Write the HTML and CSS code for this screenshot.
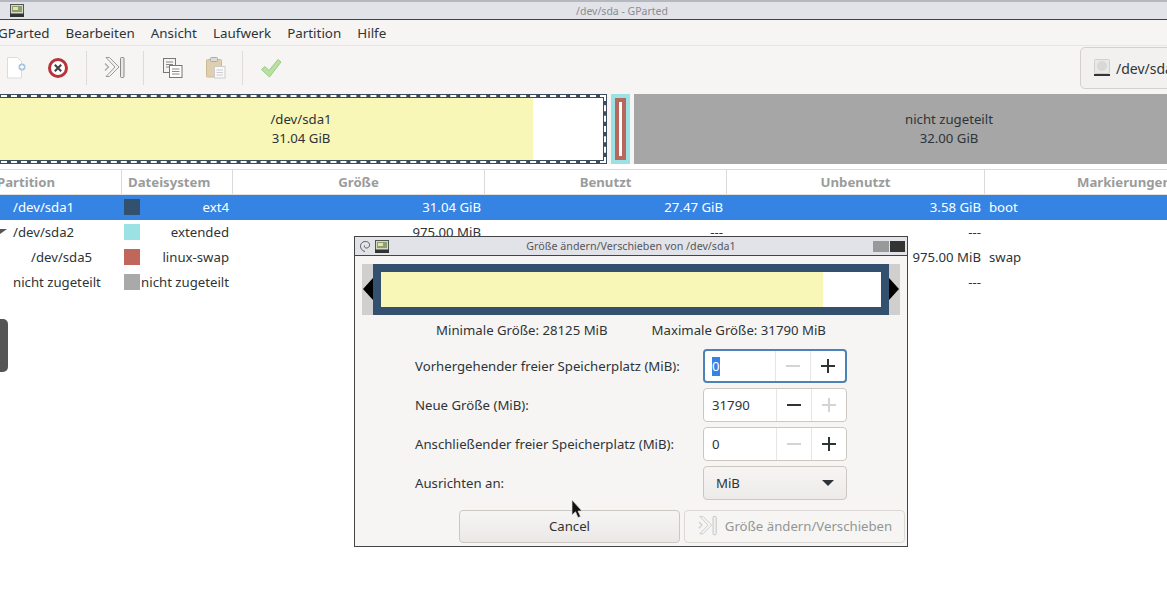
FILE: index.html
```html
<!DOCTYPE html>
<html lang="de">
<head>
    <meta charset="UTF-8">
    <title>/dev/sda - GParted</title>
    <link rel="stylesheet" href="styles.css">
</head>
<body>
    <div class="app">
        <div class="titlebar">
            <svg class="swirl" viewBox="0 0 12 12"><path d="M6 11.500C2.500 10.500 .8 7.500 1.800 4.500 3 1.500 7 .5 9.500 2.500 11.500 4.500 10.500 8 7.500 8 6 8 5 7 5.500 5.500" fill="none" stroke="#555" stroke-width="1"/></svg>
            <svg class="appicon" viewBox="0 0 14 13"><rect x="0.500" y="0.500" width="13" height="11.500" fill="#d8d8c8" stroke="#555"/><rect x="2" y="2" width="10" height="6" fill="#8aa070"/><rect x="3" y="3" width="5" height="3" fill="#e8e4a0"/><rect x="0" y="9.500" width="14" height="3.500" fill="#333"/></svg>
            <span class="titlebar-text">/dev/sda - GParted</span>
        </div>

        <div class="menubar">
            <span>GParted</span>
            <span>Bearbeiten</span>
            <span>Ansicht</span>
            <span>Laufwerk</span>
            <span>Partition</span>
            <span>Hilfe</span>
        </div>

        <div class="toolbar">
            <div class="tool">
                <svg viewBox="0 0 24 24" width="24" height="24"><path d="M3.500 1.500h10l4 4v16.500h-14z" fill="#fff" stroke="#dcdcdc"/><circle cx="18" cy="11" r="3.500" fill="#a9c3dc"/><path d="M16 11h4M18 9v4" stroke="#fff" stroke-width="1.300"/></svg>
            </div>
            <div class="tool">
                <svg viewBox="0 0 24 24" width="24" height="24"><circle cx="12" cy="12" r="8.500" fill="#fff" stroke="#b8333a" stroke-width="3"/><path d="M8.800 8.800l6.400 6.400M15.200 8.800l-6.400 6.400" stroke="#444" stroke-width="2.200"/></svg>
            </div>
            <div class="tool-sep"></div>
            <div class="tool">
                <svg viewBox="0 0 24 24" width="24" height="24"><path d="M3 1.500h3.500L16 11l-9.500 9.500H3L12 11z" fill="#f2f2f0" stroke="#9a9a9a"/><path d="M2 7.500 5.500 11 2 14.500" fill="none" stroke="#a8a8a8" stroke-width="1.300"/><rect x="17.500" y="1.500" width="3.500" height="20" rx="1" fill="#e8e8e8" stroke="#8a8a8a"/></svg>
            </div>
            <div class="tool-sep"></div>
            <div class="tool">
                <svg viewBox="0 0 24 24" width="24" height="24"><rect x="3.500" y="2.500" width="12" height="14" fill="#f4f4f4" stroke="#777"/><path d="M6 6h7M6 8.500h7M6 11h5" stroke="#888"/><rect x="9.500" y="9.500" width="12.500" height="12" fill="#fff" stroke="#777"/><path d="M12 13h7.500M12 15.500h7.500M12 18h7.500" stroke="#888"/></svg>
            </div>
            <div class="tool">
                <svg viewBox="0 0 24 24" width="24" height="24"><rect x="4.500" y="3.500" width="15" height="17.500" rx="1" fill="#e0cfae" stroke="#cdbb98"/><rect x="8.500" y="1.500" width="7" height="4" rx="1" fill="#dcdcd8" stroke="#aaa"/><rect x="12.500" y="10.500" width="10.500" height="11.500" fill="#fafafa" stroke="#ccc"/><path d="M14.500 14h6.500M14.500 16.500h6.500M14.500 19h6.500" stroke="#ccc"/></svg>
            </div>
            <div class="tool-sep"></div>
            <div class="tool">
                <svg viewBox="0 0 24 24" width="24" height="24"><path d="M2.500 13.500l3.500-3 4 4L19 3.500l3 2.500-11.500 15z" fill="#b8e0a0" stroke="#9ccb86"/></svg>
            </div>
            <div class="device">
                <svg viewBox="0 0 18 18" width="18" height="18"><rect x="1.500" y="0.500" width="15" height="14" rx="1" fill="#e8e8e4" stroke="#cfcfcb"/><circle cx="9" cy="7" r="5" fill="#d8d8d4"/><rect x="1" y="15" width="16" height="2" fill="#333"/></svg>
                <span>/dev/sda</span>
            </div>
        </div>

        <div class="graph">
            <div class="part-sda1">
                <div class="part-dash">
                    <div class="part-inner">
                        <div class="part-used"></div>
                        <div class="part-label part-label-sda1">/dev/sda1<br>31.04 GiB</div>
                    </div>
                </div>
            </div>
            <div class="part-ext"><div class="part-swap"><div class="part-swap-free"></div></div></div>
            <div class="part-free">nicht zugeteilt<br>32.00 GiB</div>
        </div>

        <div class="table">
            <div class="row head">
                <div class="cell">Partition</div>
                <div class="cell">Dateisystem</div>
                <div class="cell center">Größe</div>
                <div class="cell center">Benutzt</div>
                <div class="cell center">Unbenutzt</div>
                <div class="cell center">Markierungen</div>
            </div>
            <div class="row selected">
                <div class="cell name">/dev/sda1</div>
                <div class="cell fs"><i class="swatch c-ext4"></i><span>ext4</span></div>
                <div class="cell num">31.04 GiB</div>
                <div class="cell num">27.47 GiB</div>
                <div class="cell num">3.58 GiB</div>
                <div class="cell flag">boot</div>
            </div>
            <div class="row">
                <div class="cell name"><b class="expander"></b>/dev/sda2</div>
                <div class="cell fs"><i class="swatch c-extended"></i><span>extended</span></div>
                <div class="cell num">975.00 MiB</div>
                <div class="cell num">---</div>
                <div class="cell num">---</div>
                <div class="cell flag"></div>
            </div>
            <div class="row">
                <div class="cell name sub">/dev/sda5</div>
                <div class="cell fs"><i class="swatch c-swap"></i><span>linux-swap</span></div>
                <div class="cell num">975.00 MiB</div>
                <div class="cell num">---</div>
                <div class="cell num">975.00 MiB</div>
                <div class="cell flag">swap</div>
            </div>
            <div class="row">
                <div class="cell name">nicht zugeteilt</div>
                <div class="cell fs"><i class="swatch c-free"></i><span>nicht zugeteilt</span></div>
                <div class="cell num">32.00 GiB</div>
                <div class="cell num">---</div>
                <div class="cell num">---</div>
                <div class="cell flag"></div>
            </div>
        </div>
    </div>

    <div class="side-handle"></div>

    <div class="dialog">
        <div class="dialog-title">
            <svg class="swirl" viewBox="0 0 12 12"><path d="M6 11.500C2.500 10.500 .8 7.500 1.800 4.500 3 1.500 7 .5 9.500 2.500 11.500 4.500 10.500 8 7.500 8 6 8 5 7 5.500 5.500" fill="none" stroke="#555" stroke-width="1"/></svg>
            <svg class="appicon" viewBox="0 0 14 13"><rect x="0.500" y="0.500" width="13" height="11.500" fill="#d8d8c8" stroke="#555"/><rect x="2" y="2" width="10" height="6" fill="#8aa070"/><rect x="3" y="3" width="5" height="3" fill="#e8e4a0"/><rect x="0" y="9.500" width="14" height="3.500" fill="#333"/></svg>
            <span class="dialog-title-text">Größe ändern/Verschieben von /dev/sda1</span>
            <i class="win-btn win-min"></i>
            <i class="win-btn win-close"></i>
        </div>
        <div class="dialog-body">
            <div class="resizer">
                <b class="arrow arrow-left"></b>
                <div class="resizer-frame">
                    <div class="resizer-used"></div>
                </div>
                <b class="arrow arrow-right"></b>
            </div>
            <div class="sizes">
                <span>Minimale Größe: 28125 MiB</span>
                <span>Maximale Größe: 31790 MiB</span>
            </div>
            <div class="form">
                <div class="form-row">
                    <label>Vorhergehender freier Speicherplatz (MiB):</label>
                    <div class="spin focus">
                        <div class="spin-value"><span class="picked">0</span></div>
                        <div class="spin-btn off"><svg viewBox="0 0 16 16" width="16" height="16"><path d="M1 8h14" stroke="currentColor" stroke-width="2"/></svg></div>
                        <div class="spin-btn"><svg viewBox="0 0 16 16" width="16" height="16"><path d="M1 8h14M8 1v14" stroke="currentColor" stroke-width="2"/></svg></div>
                    </div>
                </div>
                <div class="form-row">
                    <label>Neue Größe (MiB):</label>
                    <div class="spin">
                        <div class="spin-value">31790</div>
                        <div class="spin-btn"><svg viewBox="0 0 16 16" width="16" height="16"><path d="M1 8h14" stroke="currentColor" stroke-width="2"/></svg></div>
                        <div class="spin-btn off"><svg viewBox="0 0 16 16" width="16" height="16"><path d="M1 8h14M8 1v14" stroke="currentColor" stroke-width="2"/></svg></div>
                    </div>
                </div>
                <div class="form-row">
                    <label>Anschließender freier Speicherplatz (MiB):</label>
                    <div class="spin">
                        <div class="spin-value">0</div>
                        <div class="spin-btn off"><svg viewBox="0 0 16 16" width="16" height="16"><path d="M1 8h14" stroke="currentColor" stroke-width="2"/></svg></div>
                        <div class="spin-btn"><svg viewBox="0 0 16 16" width="16" height="16"><path d="M1 8h14M8 1v14" stroke="currentColor" stroke-width="2"/></svg></div>
                    </div>
                </div>
                <div class="form-row">
                    <label>Ausrichten an:</label>
                    <div class="combo"><span>MiB</span><b class="combo-arrow"></b></div>
                </div>
            </div>
            <div class="actions">
                <div class="btn">Cancel</div>
                <div class="btn disabled">
                    <svg viewBox="0 0 24 24" width="22" height="22"><path d="M3 1.500h3.500L16 11l-9.500 9.500H3L12 11z" fill="#f6f5f4" stroke="#c8c8c8"/><path d="M2 7.500 5.500 11 2 14.500" fill="none" stroke="#ccc" stroke-width="1.300"/><rect x="17.500" y="1.500" width="3.500" height="20" rx="1" fill="#f0f0f0" stroke="#c4c4c4"/></svg>
                    <span>Größe ändern/Verschieben</span>
                </div>
            </div>
        </div>
    </div>

    <svg class="cursor" viewBox="0 0 13 20" width="13" height="20"><path d="M1 1v15l3.500-3.200 2.500 5.700 2.500-1-2.500-5.500H11z" fill="#111" stroke="#ddd" stroke-width="0.700"/></svg>
</body>
</html>
```

FILE: styles.css
```css
* {
    margin: 0;
    padding: 0;
    box-sizing: border-box;
}
body {
    width: 1167px;
    height: 595px;
    overflow: hidden;
    background-color: #fff;
    color: #2e3436;
    font-family: "Noto Sans", sans-serif;
    font-size: 13.2px;
    position: relative;
}
.app {
    width: 1284px;
    margin-left: -20px;
}
.titlebar {
    height: 20px;
    display: flex;
    align-items: center;
    position: relative;
    padding-left: 9px;
    gap: 9px;
    background-color: #e2e3e8;
    border-top: 2px solid #b6b8c0;
    border-bottom: 1px solid #444;
}
.swirl {
    width: 12px;
    height: 12px;
    flex: none;
}
.appicon {
    width: 14px;
    height: 13px;
    flex: none;
}
.titlebar-text {
    position: absolute;
    left: 0;
    right: 0;
    text-align: center;
    font-size: 10.5px;
    color: #8a8c92;
}
.menubar {
    height: 26px;
    display: flex;
    align-items: center;
    padding: 1px 0 0 18px;
    gap: 16px;
    font-size: 13.4px;
    background-color: #f6f5f4;
    border-bottom: 1px solid #e8e6e3;
}
.toolbar {
    height: 47px;
    display: flex;
    align-items: center;
    padding: 0 0 3px 15px;
    background-color: #f6f5f4;
}
.tool {
    width: 42px;
    display: flex;
    justify-content: center;
}
.tool-sep {
    width: 1px;
    height: 34px;
    margin: 0 7px;
    background-color: #dfdcd8;
}
.device {
    margin-left: auto;
    width: 184px;
    height: 42px;
    display: flex;
    align-items: center;
    gap: 5px;
    padding-left: 12px;
    font-size: 14px;
    background-color: #f2f1ef;
    border: 1px solid #d4d0cb;
    border-radius: 5px;
}
.graph {
    height: 71px;
    display: flex;
    gap: 4px;
    padding: 1px 0 0;
    background-color: #f6f5f4;
}
.part-sda1 {
    width: 627px;
    padding: 1px;
    background-color: #3c4c5e;
}
.part-dash {
    height: 100%;
    padding: 1px;
    background-color: #3c4c5e;
    border: 2px dashed #fff;
}
.part-inner {
    height: 100%;
    display: flex;
    position: relative;
    background-color: #fff;
}
.part-used {
    width: 549px;
    background-color: #f8f7b8;
}
.part-label {
    text-align: center;
    line-height: 19px;
    align-self: center;
}
.part-label-sda1 {
    position: absolute;
    left: 0;
    width: 634px;
}
.part-ext {
    width: 19px;
    padding: 4px;
    background-color: #9be2e4;
}
.part-swap {
    height: 100%;
    padding: 4px;
    background-color: #b9665c;
}
.part-swap-free {
    height: 100%;
    background-color: #fff;
}
.part-free {
    flex: 1;
    padding-top: 16px;
    text-align: center;
    line-height: 19px;
    background-color: #a6a6a6;
}
.table {
    margin-top: 5px;
    border-top: 1px solid #dcd8d3;
}
.row {
    height: 25px;
    display: grid;
    grid-template-columns: 142px 111px 252px 242px 258px 279px;
    align-items: center;
}
.row .cell {
    padding-bottom: 2px;
}
.head {
    height: 25px;
    color: #9a9c9c;
    font-weight: 700;
    background-color: #fff;
    border-bottom: 1px solid #e4e1dd;
}
.head .cell {
    height: 100%;
    line-height: 24px;
    padding-left: 6px;
    padding-right: 6px;
    padding-bottom: 0;
    border-right: 1px solid #dcdad6;
}
.head .cell:first-child {
    padding-left: 17px;
}
.head .center {
    text-align: center;
}
.selected {
    color: #fff;
    background-color: #3584e4;
}
.name {
    position: relative;
    padding-left: 33px;
}
.sub {
    padding-left: 51px;
}
.expander {
    position: absolute;
    left: 20px;
    top: 6px;
    width: 0;
    height: 0;
    border-top: 5px solid #555;
    border-right: 7px solid transparent;
}
.fs {
    display: flex;
    align-items: center;
    justify-content: space-between;
    padding: 0 4px 0 2px;
}
.swatch {
    width: 16px;
    height: 16px;
    flex: none;
}
.c-ext4 { background-color: #34506f; }
.c-extended { background-color: #9be2e4; }
.c-swap { background-color: #c1665a; }
.c-free { background-color: #a9a9a9; }
.num {
    text-align: right;
    padding-right: 4px;
}
.flag {
    padding-left: 4px;
}
.side-handle {
    position: absolute;
    left: -6px;
    top: 319px;
    width: 14px;
    height: 53px;
    background-color: #555;
    border-radius: 5px;
}
.dialog {
    position: absolute;
    left: 354px;
    top: 236px;
    width: 554px;
    height: 311px;
    background-color: #f6f5f4;
    border: 1px solid #444;
}
.dialog-title {
    height: 19px;
    display: flex;
    align-items: center;
    position: relative;
    padding: 0 2px 0 4px;
    gap: 4px;
    background-color: #e2e3e8;
    border-bottom: 1px solid #444;
}
.dialog-title-text {
    position: absolute;
    left: 0;
    right: 0;
    text-align: center;
    font-size: 10.7px;
    color: #55575c;
}
.win-btn {
    height: 11px;
    position: relative;
}
.win-min {
    width: 16px;
    margin-left: auto;
    background-color: #999;
}
.win-close {
    width: 15px;
    margin-left: -3px;
    background-color: #333;
}
.dialog-body {
    padding: 8px 7px 0;
}
.resizer {
    height: 51px;
    display: flex;
    position: relative;
    padding: 0 11px;
    background-color: #cfcfcf;
}
.resizer-frame {
    flex: 1;
    padding: 8px;
    background-color: #34506f;
}
.resizer-used {
    height: 100%;
    background: linear-gradient(to right, #f8f7b8 442px, #fff 442px);
}
.arrow {
    position: absolute;
    top: 14px;
    width: 0;
    height: 0;
    border-top: 11px solid transparent;
    border-bottom: 11px solid transparent;
}
.arrow-left {
    left: 1px;
    border-right: 10px solid #000;
}
.arrow-right {
    right: 1px;
    border-left: 10px solid #000;
}
.sizes {
    display: flex;
    justify-content: center;
    gap: 44px;
    height: 34px;
    line-height: 31px;
}
.form {
    display: flex;
    flex-direction: column;
    gap: 5px;
    padding: 0 53px;
}
.form-row {
    height: 34px;
    display: flex;
    align-items: center;
    justify-content: space-between;
}
.spin {
    width: 144px;
    height: 34px;
    display: flex;
    background-color: #fff;
    border: 1px solid #cdc7c2;
    border-radius: 4px;
}
.focus {
    border: 2px solid #4d82b8;
}
.spin-value {
    flex: 1;
    padding-left: 8px;
    line-height: 32px;
}
.focus .spin-value {
    padding-left: 7px;
    line-height: 30px;
}
.picked {
    color: #fff;
    background-color: #3584e4;
    display: inline-block;
    line-height: 19px;
}
.spin-btn {
    width: 35px;
    display: flex;
    align-items: center;
    justify-content: center;
    color: #2e3436;
    border-left: 1px solid #e8e6e3;
}
.spin-btn.off {
    color: #d4d4d2;
}
.combo {
    width: 144px;
    height: 34px;
    display: flex;
    align-items: center;
    justify-content: space-between;
    padding: 0 12px;
    background: linear-gradient(#f6f5f4, #ecebe9);
    border: 1px solid #cdc7c2;
    border-radius: 4px;
}
.combo-arrow {
    width: 0;
    height: 0;
    border-top: 6px solid #2e3436;
    border-left: 6px solid transparent;
    border-right: 6px solid transparent;
}
.actions {
    display: flex;
    gap: 4px;
    margin-top: 10px;
    padding-left: 97px;
}
.btn {
    flex: none;
    width: 221px;
    height: 33px;
    display: flex;
    align-items: center;
    justify-content: center;
    gap: 6px;
    padding-bottom: 1px;
    background: linear-gradient(#f6f5f4, #ebe9e7);
    border: 1px solid #cdc7c2;
    border-radius: 4px;
}
.btn.disabled {
    color: #929595;
    background: #f6f5f4;
    border-color: #dcd8d3;
}
.cursor {
    position: absolute;
    left: 571px;
    top: 499px;
}
```
